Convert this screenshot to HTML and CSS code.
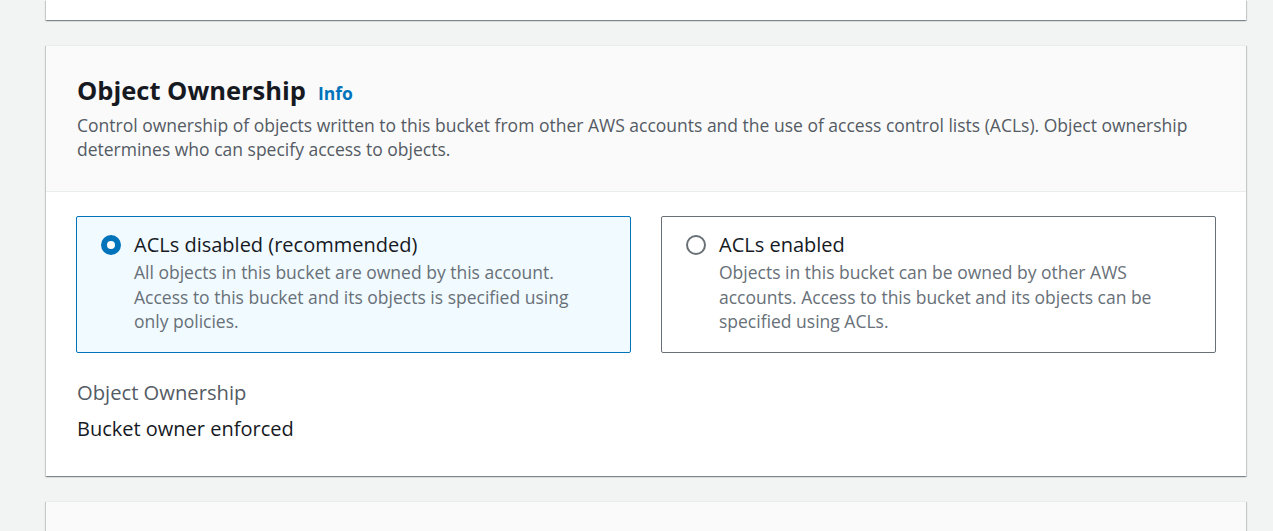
FILE: index.html
```html
<!DOCTYPE html>
<html>
<head>
<meta charset="utf-8">
<link rel="stylesheet" href="styles.css">
</head>
<body>
<div class="page">
  <div class="card card-top"></div>

  <section class="card">
    <header class="card-header">
      <h2 class="title">Object Ownership <a class="info" href="#">Info</a></h2>
      <p class="desc">Control ownership of objects written to this bucket from other AWS accounts and the use of access control lists (ACLs). Object ownership determines who can specify access to objects.</p>
    </header>
    <div class="card-body">
      <div class="tiles">
        <label class="tile selected">
          <span class="radio checked"></span>
          <span class="tile-text">
            <span class="tile-label">ACLs disabled (recommended)</span>
            <span class="tile-desc">All objects in this bucket are owned by this account. Access to this bucket and its objects is specified using only policies.</span>
          </span>
        </label>
        <label class="tile">
          <span class="radio"></span>
          <span class="tile-text">
            <span class="tile-label">ACLs enabled</span>
            <span class="tile-desc">Objects in this bucket can be owned by other AWS accounts. Access to this bucket and its objects can be specified using ACLs.</span>
          </span>
        </label>
      </div>
      <div class="kv">
        <div class="kv-key">Object Ownership</div>
        <div class="kv-value">Bucket owner enforced</div>
      </div>
    </div>
  </section>

  <section class="card card-next"></section>
</div>
</body>
</html>
```

FILE: styles.css
```css
* { box-sizing: border-box; }
html, body {
  margin: 0;
  padding: 0;
  background: #f2f3f3;
  font-family: "Open Sans", "Noto Sans", sans-serif;
  color: #16191f;
  overflow: hidden;
}
.page {
  width: 1200px;
  margin-left: 46px;
  display: flex;
  flex-direction: column;
  gap: 25px;
}
.card {
  background: #fff;
  box-shadow: 0 1px 1px 0 rgba(0, 28, 36, 0.3), 1px 1px 1px 0 rgba(0, 28, 36, 0.15), -1px 1px 1px 0 rgba(0, 28, 36, 0.15);
  border-top: 1px solid #eaeded;
}
.card-top {
  height: 20px;
  border-top: none;
}
.card-header {
  background: #fafafa;
  border-bottom: 1px solid #eaeded;
  padding: 28px 30px 30px 31px;
}
.title {
  margin: 0;
  font-size: 25.5px;
  font-weight: 700;
  line-height: 32px;
  color: #16191f;
  display: flex;
  align-items: baseline;
  gap: 12px;
}
.info {
  font-size: 17.5px;
  line-height: 1;
  font-weight: 700;
  color: #0073bb;
  text-decoration: none;
}
.desc {
  margin: 7px 0 0;
  font-size: 17.5px;
  line-height: 24px;
  color: #545b64;
}
.card-body {
  padding: 24px 30px 34px 30px;
}
.tiles {
  display: grid;
  grid-template-columns: 1fr 1fr;
  gap: 30px;
}
.tile {
  display: flex;
  gap: 13px;
  align-items: flex-start;
  border: 1px solid #687078;
  border-radius: 2px;
  padding: 16px 41px 0 24px;
  height: 137px;
}
.tile.selected {
  border-color: #0073bb;
  background: #f1faff;
}
.radio {
  flex: none;
  width: 20px;
  height: 20px;
  border-radius: 50%;
  border: 2px solid #687078;
  margin-top: 2px;
  background: #fff;
}
.radio.checked {
  border: 6px solid #0073bb;
}
.tile-text {
  display: flex;
  flex-direction: column;
}
.tile-label {
  font-size: 20px;
  line-height: 24px;
  color: #16191f;
}
.tile-desc {
  margin-top: 3px;
  font-size: 17.5px;
  line-height: 24.5px;
  color: #687078;
}
.kv {
  margin-top: 26px;
  padding-left: 1px;
}
.kv-key {
  font-size: 20.2px;
  line-height: 26px;
  color: #545b64;
}
.kv-value {
  margin-top: 11px;
  font-size: 20px;
  line-height: 26px;
  color: #16191f;
}
.card-next {
  height: 60px;
  background: #fafafa;
}
```
